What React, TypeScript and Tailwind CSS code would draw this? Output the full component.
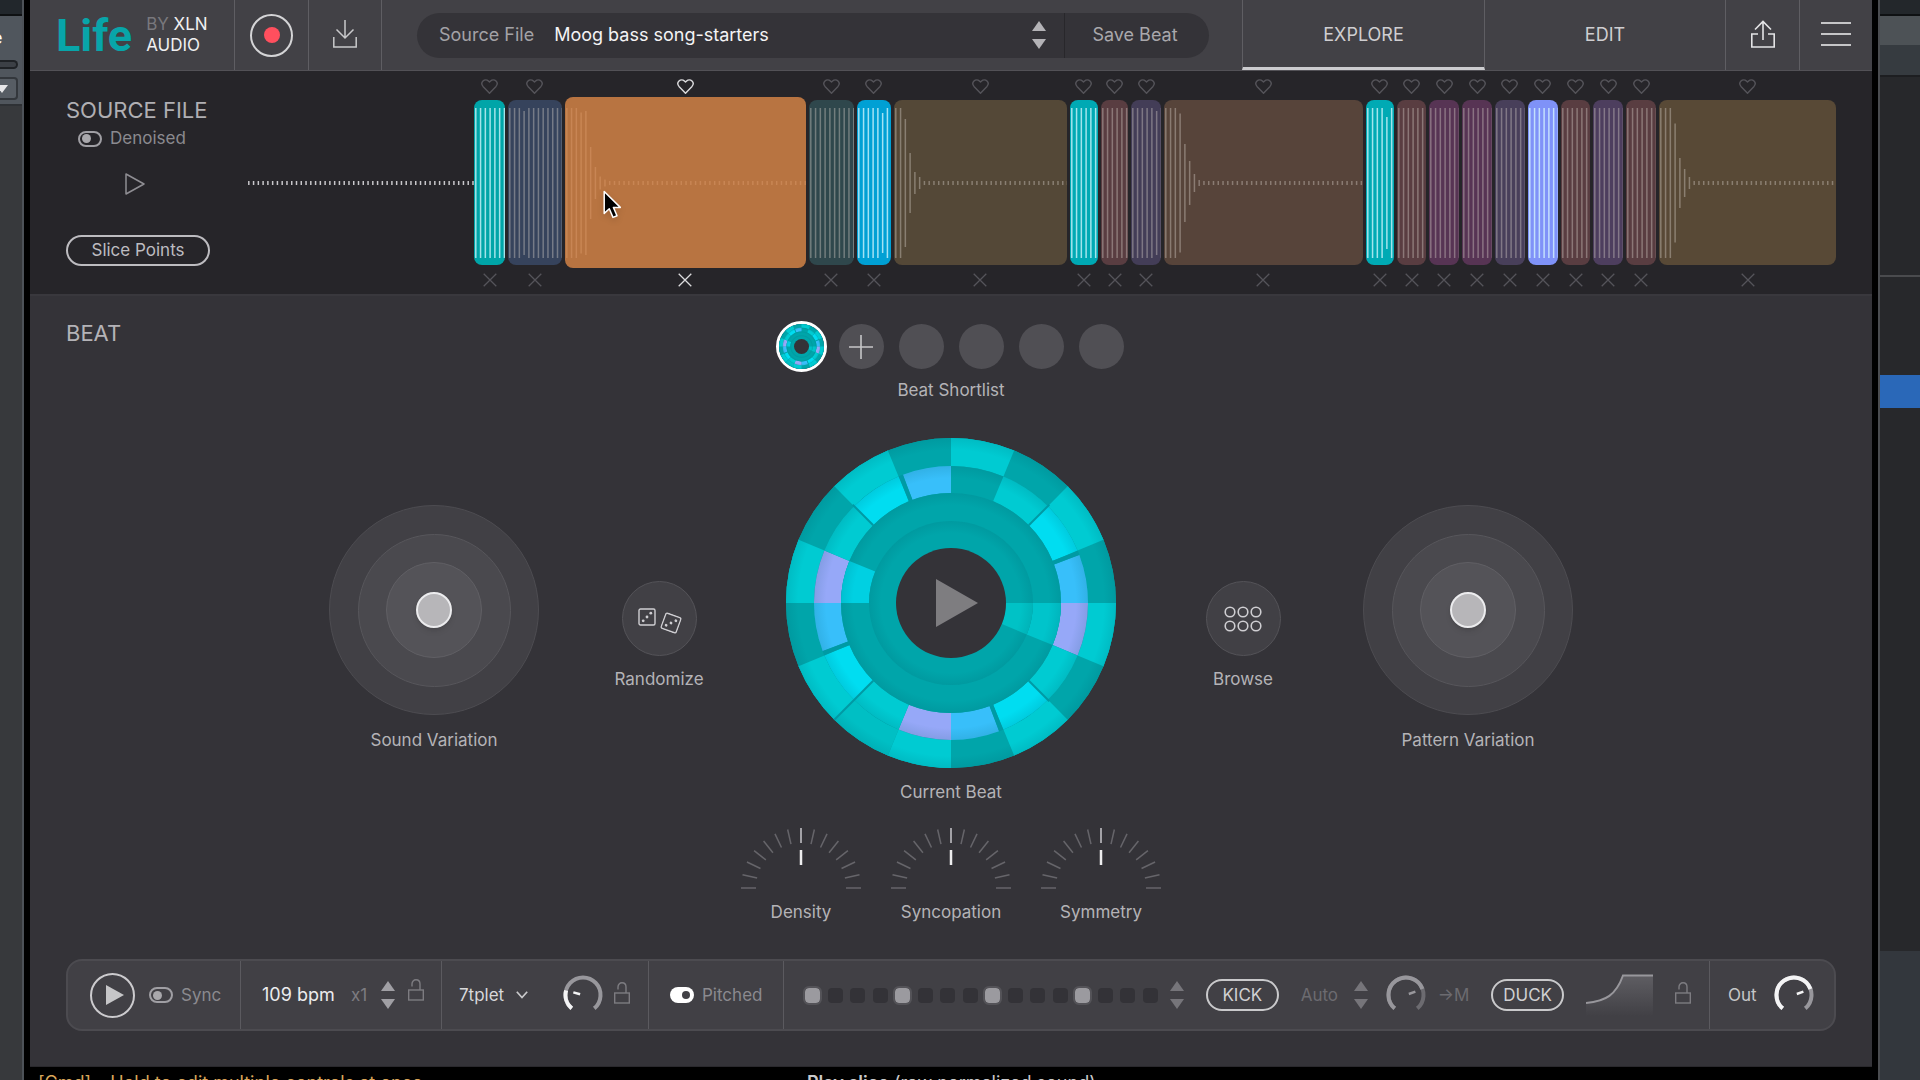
import React from "react";

type SliceData = { w: number; color: string; bright?: boolean; shape?: number[]; active?: boolean };

const WINE = "#593d41";
const PLUM = "#573454";

const SLICES: SliceData[] = [
  { w: 31, color: "#00a5a8", bright: true },
  { w: 54, color: "#36435c", shape: [150, 150, 150, 144] },
  { w: 243, color: "#b87441", shape: [150, 150, 150, 141, 144, 72, 32, 13, 7, 4], active: true },
  { w: 45, color: "#2f474c" },
  { w: 34, color: "#00a0d4", bright: true, shape: [150, 150, 150, 150, 150, 140] },
  { w: 174, color: "#544837", shape: [150, 150, 128, 60, 22, 12, 4] },
  { w: 29, color: "#00a9b4", bright: true },
  { w: 27, color: WINE },
  { w: 30, color: "#433d57", shape: [150, 150, 150, 150, 150, 144] },
  { w: 200, color: "#57443a", shape: [150, 150, 150, 139, 78, 44, 18, 6, 4] },
  { w: 28, color: "#00aab4", bright: true, shape: [150, 150, 150, 150, 132] },
  { w: 30, color: WINE },
  { w: 30, color: PLUM },
  { w: 30, color: PLUM },
  { w: 30, color: "#483f5a" },
  { w: 30, color: "#7f92f8", bright: true },
  { w: 30, color: WINE },
  { w: 30, color: "#4d3e5e" },
  { w: 30, color: WINE },
  { w: 178, color: "#584936", shape: [150, 150, 150, 119, 50, 28, 12, 4] },
];

function Waveform({ count, shape, stroke, opacity }: { count: number; shape: number[]; stroke: string; opacity: number }) {
  const last = shape.length ? shape[shape.length - 1] : 150;
  const rest = last > 10 ? 150 : last;
  return (
    <svg className="block h-[150px] w-full" aria-hidden="true">
      <g stroke={stroke} strokeOpacity={opacity} strokeWidth={1.5}>
        {Array.from({ length: count }, (_, i) => {
          const h = shape[i] ?? rest;
          const x = 1.8 + i * 4.77;
          return <line key={i} x1={x} x2={x} y1={75 - h / 2} y2={75 + h / 2} />;
        })}
      </g>
    </svg>
  );
}

function Heart() {
  return (
    <svg viewBox="0 0 17 15" className="h-[15px] w-[17px]" fill="none" stroke="currentColor" strokeWidth={1.4} strokeLinejoin="round" aria-hidden="true">
      <path d="M8.5 14.2 L2 7.4 C0.6 5.8 0.6 3.4 2 2 C3.5 0.5 5.9 0.5 7.4 2 L8.5 3.1 L9.6 2 C11.1 0.5 13.5 0.5 15 2 C16.4 3.4 16.4 5.8 15 7.4 Z" />
    </svg>
  );
}

function Cross() {
  return (
    <svg viewBox="0 0 14 14" className="size-[14px]" fill="none" stroke="currentColor" strokeWidth={1.3} aria-hidden="true">
      <path d="M0.7 0.7 L13.3 13.3 M13.3 0.7 L0.7 13.3" />
    </svg>
  );
}

function Cursor() {
  return (
    <svg viewBox="0 0 20 30" className="pointer-events-none absolute top-[90px] left-[38px] h-[30px] w-5 drop-shadow-md" aria-hidden="true">
      <path d="M1.2 1.5 V23.4 L6.3 18.7 L10 27.4 L14 25.7 L10.4 17.4 H17.3 Z" fill="#000" stroke="#fff" strokeWidth={1.5} strokeLinejoin="round" />
    </svg>
  );
}

function Slice({ s, index }: { s: SliceData; index: number }) {
  const n = index + 1;
  const tone = s.active ? "text-[#dcdcde]" : "text-[#55545a]";
  return (
    <div className="flex min-w-0 flex-col items-center" style={{ flex: `${s.w} 1 0px` }}>
      <button type="button" aria-label={`Favourite slice ${n}`} className={`mb-[6px] ${tone}`}>
        <Heart />
      </button>
      <div className="relative h-[165px] w-full">
        <button
          type="button"
          aria-label={`Play slice ${n}`}
          className={`flex w-full items-center overflow-hidden rounded-lg ${s.active ? "-mt-[3px] h-[171px]" : "h-[165px]"}`}
          style={{ backgroundColor: s.color }}
        >
          <Waveform
            count={Math.floor(s.w / 4.77) + 1}
            shape={s.shape ?? []}
            stroke={s.active ? "#e0a070" : s.bright ? "#d8f8ff" : "#d8d0c8"}
            opacity={s.active ? 0.4 : s.bright ? 0.75 : 0.4}
          />
        </button>
        {s.active && <Cursor />}
      </div>
      <button type="button" aria-label={`Discard slice ${n}`} className={`mt-[8px] ${tone}`}>
        <Cross />
      </button>
    </div>
  );
}

function Toggle({ label, on }: { label: string; on?: boolean }) {
  return (
    <label className="flex items-center gap-2 text-[17px] text-[#8b8a8f]">
      <input type="checkbox" role="switch" defaultChecked={on} className="sr-only" />
      {on ? (
        <span className="flex h-4 w-6 items-center justify-end rounded-full bg-white px-1">
          <span className="h-2 w-2 rounded-full bg-[#414045]" />
        </span>
      ) : (
        <span className="flex h-4 w-6 items-center rounded-full border-2 border-[#a09fa4] px-[2px]">
          <span className="size-[9px] rounded-full bg-[#a9a8ac]" />
        </span>
      )}
      {label}
    </label>
  );
}

function Stepper({ label, tone = "text-[#a09fa4]" }: { label: string; tone?: string }) {
  return (
    <div className={`flex flex-col gap-2 ${tone}`}>
      <button type="button" aria-label={`${label} up`}>
        <svg viewBox="0 0 14 10" className="block h-[10px] w-[14px]" fill="currentColor" aria-hidden="true">
          <path d="M7 0 L14 10 H0 Z" />
        </svg>
      </button>
      <button type="button" aria-label={`${label} down`}>
        <svg viewBox="0 0 14 10" className="block h-[10px] w-[14px]" fill="currentColor" aria-hidden="true">
          <path d="M7 10 L14 0 H0 Z" />
        </svg>
      </button>
    </div>
  );
}

function Lock({ label }: { label: string }) {
  return (
    <button type="button" aria-label={label} className="-mt-1 text-[#7d7c81]">
      <svg viewBox="0 0 16 22" className="block h-[22px] w-4" fill="none" stroke="currentColor" strokeWidth={1.4} aria-hidden="true">
        <rect x="0.7" y="11" width="14.6" height="10" />
        <path d="M4 7.5 V5 C4 2.4 5.8 0.8 8 0.8 C10.200 0.8 12 2.4 12 5 V11" />
      </svg>
    </button>
  );
}

const rad = (deg: number) => (deg * Math.PI) / 180;
const point = (cx: number, cy: number, r: number, deg: number) => [cx + r * Math.sin(rad(deg)), cy - r * Math.cos(rad(deg))];

function arc(cx: number, cy: number, r: number, a: number, b: number) {
  const [x1, y1] = point(cx, cy, r, a);
  const [x2, y2] = point(cx, cy, r, b);
  return `M${x1} ${y1} A${r} ${r} 0 ${b - a > 180 ? 1 : 0} 1 ${x2} ${y2}`;
}

function ArcKnob({ label, angle, lit, rest }: { label: string; angle: number; lit: string; rest: string }) {
  const [ax, ay] = point(20, 20, 3, angle);
  const [bx, by] = point(20, 20, 10, angle);
  return (
    <div className="relative size-10">
      <svg viewBox="0 0 40 40" className="block size-10" fill="none" aria-hidden="true">
        <path d={arc(20, 20, 17.5, -140, 140)} stroke={rest} strokeWidth={4} />
        <path d={arc(20, 20, 17.5, -140, angle)} stroke={lit} strokeWidth={4} />
        <line x1={ax} y1={ay} x2={bx} y2={by} stroke={lit === "#98979c" ? lit : "#f4f4f5"} strokeWidth={2.5} />
      </svg>
      <input type="range" aria-label={label} className="absolute inset-0 size-full opacity-0" />
    </div>
  );
}

function TickKnob({ label }: { label: string }) {
  return (
    <label className="relative flex w-[150px] flex-col items-center gap-[10px]">
      <svg viewBox="0 0 124 64" className="h-16 w-[124px]" strokeLinecap="butt" aria-hidden="true">
        {Array.from({ length: 15 }, (_, i) => {
          const a = -90 + (i * 180) / 14;
          const [x1, y1] = point(62, 62, 45, a);
          const [x2, y2] = point(62, 62, 60, a);
          return <line key={i} x1={x1} y1={y1} x2={x2} y2={y2} stroke={i === 7 ? "#a2a1a6" : "#66656a"} strokeWidth={i === 7 ? 2 : 1.5} />;
        })}
        <line x1="62" y1="24" x2="62" y2="39" stroke="#ededee" strokeWidth={2.5} />
      </svg>
      <span>{label}</span>
      <input type="range" className="absolute inset-0 size-full opacity-0" />
    </label>
  );
}

const DARK = "#00a5aa";
const TEAL = "#00cbd2";
const CYAN = "#00ddf1";
const BLUE = "#38bffa";
const LILAC = "#96a8f8";

const RINGS: { outer: number; inner: number; cells: string[] }[] = [
  { outer: 165, inner: 137, cells: [TEAL, DARK, TEAL, DARK, TEAL, DARK, TEAL, DARK, TEAL, "#00bfc4", TEAL, DARK, TEAL, DARK, TEAL, DARK] },
  { outer: 137, inner: 110, cells: [DARK, TEAL, CYAN, BLUE, LILAC, TEAL, CYAN, BLUE, LILAC, TEAL, CYAN, BLUE, LILAC, TEAL, CYAN, BLUE] },
  { outer: 110, inner: 82, cells: [DARK, DARK, DARK, DARK, "#00c4cb", DARK, DARK, DARK, DARK, DARK, DARK, DARK, "#00d0e2", DARK, DARK, DARK] },
  { outer: 82, inner: 55, cells: [DARK, DARK, DARK, DARK, "#00c2c6", DARK, DARK, DARK, DARK, DARK, DARK, DARK, DARK, DARK, DARK] },
];

function sector(inner: number, outer: number, a: number, b: number) {
  const [x1, y1] = point(165, 165, outer, a);
  const [x2, y2] = point(165, 165, outer, b);
  const [x3, y3] = point(165, 165, inner, b);
  const [x4, y4] = point(165, 165, inner, a);
  return `M${x1} ${y1} A${outer} ${outer} 0 0 1 ${x2} ${y2} L${x3} ${y3} A${inner} ${inner} 0 0 0 ${x4} ${y4} Z`;
}

function BeatWheel({ id, className }: { id: string; className: string }) {
  return (
    <svg viewBox="0 0 330 330" className={className} aria-hidden="true">
      <defs>
        {RINGS.map((r) => (
          <radialGradient key={r.outer} id={`${id}-${r.outer}`} gradientUnits="userSpaceOnUse" cx="165" cy="165" r={r.outer}>
            <stop offset={(r.outer - 12) / r.outer} stopColor="#004a58" stopOpacity="0" />
            <stop offset="1" stopColor="#004a58" stopOpacity="0.12" />
          </radialGradient>
        ))}
      </defs>
      <circle cx="165" cy="165" r="165" fill={DARK} />
      {RINGS.map((r) => (
        <g key={r.outer}>
          <circle cx="165" cy="165" r={r.outer} fill={DARK} />
          {r.cells.map((c, i) => {
            if (c === DARK) return null;
            const gap = c === BLUE ? 2 : 0;
            return <path key={i} d={sector(r.inner, r.outer, i * 22.5 + gap, i * 22.5 + 22.5)} fill={c} />;
          })}
          <circle cx="165" cy="165" r={r.outer} fill={`url(#${id}-${r.outer})`} />
        </g>
      ))}
      {[45, 135, 225, 315].map((a) => {
        const [x1, y1] = point(165, 165, 110, a);
        const [x2, y2] = point(165, 165, a === 225 ? 165 : 139, a);
        return <line key={a} x1={x1} y1={y1} x2={x2} y2={y2} stroke="#009aa4" strokeWidth={2} />;
      })}
      {[67.5, 157.5, 247.5, 337.5].map((a) => {
        const [x1, y1] = point(165, 165, 110, a + 1);
        const [x2, y2] = point(165, 165, 137, a + 1);
        return <line key={a} x1={x1} y1={y1} x2={x2} y2={y2} stroke="#009aa4" strokeWidth={4} />;
      })}
      <circle cx="165" cy="165" r="55" fill="#343338" />
    </svg>
  );
}

function VariationPad({ label }: { label: string }) {
  return (
    <label className="relative mt-[67px] flex w-[210px] flex-col items-center gap-[13px]">
      <span className="flex size-[210px] items-center justify-center rounded-full border border-[#4d4c51] bg-[#414045]">
        <span className="flex size-[153px] items-center justify-center rounded-full border border-[#57565b] bg-[#4a494e]">
          <span className="flex size-24 items-center justify-center rounded-full border border-[#605f64] bg-[#545358]">
            <span className="size-9 rounded-full border-2 border-[#ececee] bg-[#b7b6b9] shadow-md" />
          </span>
        </span>
      </span>
      <span>{label}</span>
      <input type="range" className="absolute inset-0 size-full opacity-0" />
    </label>
  );
}

function RoundAction({ label, children }: { label: string; children: React.ReactNode }) {
  return (
    <button type="button" className="mt-[143px] flex w-[120px] flex-col items-center gap-[11px]">
      <span className="flex size-[75px] items-center justify-center rounded-full border border-[#545358] bg-[#414045]">{children}</span>
      <span>{label}</span>
    </button>
  );
}

function Die({ className }: { className: string }) {
  return (
    <svg viewBox="0 0 18 18" className={className} aria-hidden="true">
      <rect x="1" y="1" width="16" height="16" rx="1.500" fill="none" stroke="#cfced2" strokeWidth={1.4} />
      <g fill="#cfced2">
        <circle cx="5.200" cy="12.800" r="1.400" />
        <circle cx="9" cy="9" r="1.400" />
        <circle cx="12.800" cy="5.200" r="1.400" />
      </g>
    </svg>
  );
}

function Header() {
  return (
    <header className="flex h-[71px] shrink-0 items-stretch border-b border-[#525156] bg-[#424146] text-lg">
      <div className="flex w-[205px] items-center gap-[14px] border-r border-[#5f5e63] pl-[26px]">
        <span className="font-[Roboto] text-[45px] leading-none font-bold text-[#08a5a9]">Life</span>
        <span className="text-[17px] leading-[21px] text-[#f0f0f1]">
          <span className="text-[#79787d]">BY</span> XLN
          <br />
          AUDIO
        </span>
      </div>
      <button type="button" aria-label="Record" className="flex w-[74px] items-center justify-center border-r border-[#5f5e63]">
        <span className="flex size-[43px] items-center justify-center rounded-full border-2 border-[#d4d4d6]">
          <span className="size-4 rounded-full bg-[#ff4f5e]" />
        </span>
      </button>
      <button type="button" aria-label="Import" className="flex w-[73px] items-center justify-center border-r border-[#5f5e63] pb-[3px]">
        <svg viewBox="0 0 24 28" className="h-7 w-6" fill="none" stroke="#c9c9cb" strokeWidth={1.5} aria-hidden="true">
          <path d="M12 0 V18 M3.500 9.500 L12 18 L20.500 9.500 M0.800 17 V27 H23.200 V17" />
        </svg>
      </button>
      <div className="flex flex-1 items-center pr-[33px] pl-[35px]">
        <div className="flex h-[45px] flex-1 items-center rounded-full bg-[#343338]">
          <label htmlFor="source" className="pl-[22px] text-[#a3a2a6]">
            Source File
          </label>
          <select id="source" className="min-w-0 flex-1 appearance-none pl-5 text-[#f4f4f5] outline-none">
            <option>Moog bass song-starters</option>
          </select>
          <div className="px-[18px]">
            <Stepper label="Source file" tone="text-[#b4b3b7]" />
          </div>
          <button type="button" className="h-full w-[145px] border-l border-[#28272b] pr-1 text-lg text-[#a9a8ac]">
            Save Beat
          </button>
        </div>
      </div>
      <nav className="flex text-[#cfced1]">
        <button type="button" className="w-[243px] border-r border-b-[3px] border-l border-[#5f5e63] border-b-[#cccccf] pt-[3px]">
          EXPLORE
        </button>
        <button type="button" className="w-[241px] border-r border-[#5f5e63]">
          EDIT
        </button>
      </nav>
      <button type="button" aria-label="Share" className="flex w-[74px] items-center justify-center border-r border-[#5f5e63] pb-[3px]">
        <svg viewBox="0 0 24 28" className="h-7 w-6" fill="none" stroke="#e4e4e6" strokeWidth={1.6} aria-hidden="true">
          <path d="M12 20 V1.500 M4 9.500 L12 1.500 L20 9.500 M7 14 H0.800 V27 H23.200 V14 H17" />
        </svg>
      </button>
      <button type="button" aria-label="Menu" className="flex w-[72px] flex-col items-center justify-center gap-[9px] pb-[2px]">
        <span className="h-[2px] w-[30px] bg-[#c6c6c8]" />
        <span className="h-[2px] w-[30px] bg-[#c6c6c8]" />
        <span className="h-[2px] w-[30px] bg-[#c6c6c8]" />
      </button>
    </header>
  );
}

function SourcePanel() {
  return (
    <section className="flex h-[225px] shrink-0 border-b-2 border-[#39383d] bg-[#262529] px-9">
      <div className="flex w-[181px] flex-col items-start pt-[25px]">
        <h2 className="text-[22px] leading-7 text-[#b0afb3]">SOURCE FILE</h2>
        <div className="pt-[2px] pl-3">
          <Toggle label="Denoised" />
        </div>
        <button type="button" aria-label="Play source" className="mt-[21px] ml-[59px]">
          <svg viewBox="0 0 20 22" className="block h-[22px] w-5" fill="none" stroke="#8f8e93" strokeWidth={1.5} strokeLinejoin="round" aria-hidden="true">
            <path d="M1 1 L19 11 L1 21 Z" />
          </svg>
        </button>
        <button type="button" className="mt-10 flex h-[31px] w-36 items-center justify-center rounded-full border-2 border-[#bdbcc0] pt-[1px] text-[17px] text-[#bdbcc0]">
          Slice Points
        </button>
      </div>
      <div className="flex min-w-0 flex-1 pt-[8px]">
        <div className="min-w-0 overflow-hidden pt-[29px]" style={{ flex: "227 1 0px" }}>
          <Waveform count={48} shape={[4]} stroke="#c8c7ca" opacity={1} />
        </div>
        <div className="flex min-w-0 gap-[3px]" style={{ flex: "1361 1 0px" }}>
          {SLICES.map((s, i) => (
            <Slice key={i} s={s} index={i} />
          ))}
        </div>
      </div>
    </section>
  );
}

function BeatPanel() {
  return (
    <section className="flex flex-1 flex-col bg-[#343338] px-9 text-[17px] leading-6 text-[#b4b3b7]">
      <h2 className="h-[25px] pt-[23px] text-[22px] leading-7">BEAT</h2>
      <div className="flex flex-col items-center gap-[6px]">
        <div className="flex items-center gap-[15px] pr-[3px]">
          <button type="button" aria-label="Beat 1" className="rounded-full border-[3px] border-white">
            <BeatWheel id="mini" className="size-[45px]" />
          </button>
          <button type="button" aria-label="Add beat" className="-ml-[3px] flex size-[45px] items-center justify-center rounded-full bg-[#504f54]">
            <svg viewBox="0 0 24 24" className="size-6" stroke="#c6c6c8" strokeWidth={1.6} aria-hidden="true">
              <path d="M12 0 V24 M0 12 H24" />
            </svg>
          </button>
          {[3, 4, 5, 6].map((n) => (
            <button key={n} type="button" aria-label={`Empty beat ${n}`} className="size-[45px] rounded-full bg-[#504f54]" />
          ))}
        </div>
        <span>Beat Shortlist</span>
      </div>
      <div className="flex items-start justify-center pt-9">
        <VariationPad label="Sound Variation" />
        <div className="ml-[60px]">
          <RoundAction label="Randomize">
            <Die className="-mt-1 size-[18px]" />
            <Die className="mt-2 ml-[6px] size-[18px] rotate-[20deg]" />
          </RoundAction>
        </div>
        <button type="button" className="mx-[67px] flex flex-col items-center gap-3">
          <span className="relative flex items-center justify-center">
            <BeatWheel id="main" className="size-[330px]" />
            <svg viewBox="0 0 42 48" className="absolute left-[150px] h-12 w-[42px]" aria-hidden="true">
              <path d="M0 0 L42 24 L0 48 Z" fill="#7e7d80" />
            </svg>
          </span>
          <span>Current Beat</span>
        </button>
        <div className="mr-[60px]">
          <RoundAction label="Browse">
            <svg viewBox="0 0 38 26" className="h-[26px] w-[38px]" fill="none" stroke="#cfced2" strokeWidth={1.6} aria-hidden="true">
              {[6, 19, 32].map((x) => [6, 20].map((y) => <circle key={`${x}-${y}`} cx={x} cy={y} r="4.800" />))}
            </svg>
          </RoundAction>
        </div>
        <VariationPad label="Pattern Variation" />
      </div>
      <div className="flex justify-center pt-[22px]">
        <TickKnob label="Density" />
        <TickKnob label="Syncopation" />
        <TickKnob label="Symmetry" />
      </div>
      <Transport />
    </section>
  );
}

function Transport() {
  return (
    <div className="mt-auto mb-[35px] flex h-[72px] shrink-0 items-stretch rounded-2xl border-2 border-[#4c4b50] bg-[#414045]">
      <div className="flex w-[173px] items-center gap-[14px] border-r border-[#5b5a5f] pl-[22px]">
        <button type="button" aria-label="Play" className="flex size-[45px] items-center justify-center rounded-full border-2 border-[#cccbce]">
          <svg viewBox="0 0 18 20" className="ml-1 h-5 w-[18px]" fill="#c6c6c8" aria-hidden="true">
            <path d="M0 0 L18 10 L0 20 Z" />
          </svg>
        </button>
        <Toggle label="Sync" />
      </div>
      <div className="flex w-[201px] items-center border-r border-[#5b5a5f] pl-[21px]">
        <input type="text" aria-label="Tempo" defaultValue="109 bpm" className="w-[89px] text-lg text-[#ececee] outline-none" />
        <span className="w-[30px] text-[#7d7c81]">x1</span>
        <Stepper label="Tempo" />
        <div className="ml-[13px]">
          <Lock label="Lock tempo" />
        </div>
      </div>
      <div className="flex w-[207px] items-center border-r border-[#5b5a5f] pl-[17px]">
        <div className="relative flex items-center">
          <select aria-label="Grid" className="w-[69px] appearance-none text-[#d8d8da] outline-none">
            <option>7tplet</option>
          </select>
          <svg viewBox="0 0 12 8" className="pointer-events-none absolute right-0 h-2 w-3" fill="none" stroke="#c9c9cb" strokeWidth={1.7} aria-hidden="true">
            <path d="M0.800 0.800 L6 6.500 L11.200 0.800" />
          </svg>
        </div>
        <div className="mr-[11px] ml-[35px]">
          <ArcKnob label="Swing" angle={-75} lit="#f4f4f5" rest="#98979c" />
        </div>
        <Lock label="Lock grid" />
      </div>
      <div className="flex w-[135px] items-center border-r border-[#5b5a5f] pl-[21px]">
        <Toggle label="Pitched" on />
      </div>
      <div className="flex flex-1 items-center justify-between border-r border-[#5b5a5f] pr-[18px] pl-[19px]">
        <div className="flex items-center gap-[10px]">
          <div className="flex w-[357px] items-center justify-between">
            {Array.from({ length: 16 }, (_, i) => (
              <input
                key={i}
                type="checkbox"
                aria-label={`Step ${i + 1}`}
                defaultChecked={i % 4 === 0}
                className="size-[19px] appearance-none rounded-md border-2 border-transparent bg-[#333237] bg-clip-padding checked:border-[#545358] checked:bg-[#9b9a9f]"
              />
            ))}
          </div>
          <Stepper label="Pattern" tone="text-[#76757a]" />
        </div>
        <button type="button" className="h-8 w-[73px] rounded-full border-2 border-[#c9c9cb] text-[17px] leading-none text-[#d0d0d2]">
          KICK
        </button>
        <div className="flex items-center text-[#6c6b70]">
          <span className="w-[53px]">Auto</span>
          <Stepper label="Auto" tone="text-[#76757a]" />
          <div className="mr-3 ml-[18px]">
            <ArcKnob label="Kick amount" angle={70} lit="#98979c" rest="#6c6b70" />
          </div>
          <span>→M</span>
        </div>
        <button type="button" className="h-8 w-[73px] rounded-full border-2 border-[#c9c9cb] text-[17px] leading-none text-[#d0d0d2]">
          DUCK
        </button>
        <div className="flex items-center gap-[22px]">
          <svg viewBox="0 0 67 42" className="h-[42px] w-[67px]" aria-hidden="true">
            <defs>
              <linearGradient id="duck" x1="0" y1="0" x2="0" y2="1">
                <stop offset="0" stopColor="#5f5e63" />
                <stop offset="1" stopColor="#414045" />
              </linearGradient>
            </defs>
            <path d="M0 29 C20 27 30 21 37 1 H67 V42 H0 Z" fill="url(#duck)" />
            <path d="M0 29 C20 27 30 21 37 1.500 H67" fill="none" stroke="#98979c" strokeWidth={2} />
          </svg>
          <Lock label="Lock duck" />
        </div>
      </div>
      <div className="flex w-[124px] items-center pl-[18px]">
        <span className="w-[46px] text-[#c6c6c8]">Out</span>
        <ArcKnob label="Output" angle={70} lit="#f4f4f5" rest="#98979c" />
      </div>
    </div>
  );
}

export default function App() {
  return (
    <div className="flex h-screen overflow-hidden bg-black font-[Inter,sans-serif]">
      <div className="flex w-6 shrink-0 flex-col overflow-hidden border-r-2 border-[#4d5258] bg-[#37393c]">
        <div className="h-4 shrink-0 border-b-2 border-[#0f1113] bg-[#22272c]" />
        <div className="flex h-[90px] shrink-0 flex-col items-start border-b-2 border-[#2e3135] bg-[#50565d]">
          <span className="-ml-2 pt-[10px] text-lg leading-6 text-white">e</span>
          <span className="mt-[10px] h-[9px] w-[18px] rounded-r-full border-2 border-l-0 border-[#1f2226] bg-[#3c4046]" />
          <span className="mt-2 flex h-[23px] w-[18px] items-center rounded-r border-2 border-l-0 border-[#33373c] bg-[#575d64]">
            <svg viewBox="0 0 8 8" className="size-2" fill="#e6e6e8" aria-hidden="true">
              <path d="M-4 0 H8 L2 8 Z" />
            </svg>
          </span>
        </div>
      </div>
      <main className="mx-[6px] flex min-w-0 flex-1 flex-col">
        <Header />
        <SourcePanel />
        <BeatPanel />
        <footer className="flex h-[14px] shrink-0 border-t border-[#2a292d] text-lg leading-6 whitespace-nowrap">
          <span className="w-[777px] pt-1 pl-2 text-[#d9a65a]">
            [Cmd] – Hold to edit multiple controls at once.
          </span>
          <span className="pt-1 text-[#c9c9cb]">
            <strong className="font-semibold">Play slice</strong> (raw normalized sound)
          </span>
        </footer>
      </main>
      <div className="flex w-[42px] shrink-0 flex-col border-l-2 border-[#4a4c50] bg-[#27282b]">
        <div className="h-4 shrink-0 border-b-2 border-[#0f1113] bg-[#23272b]" />
        <div className="h-[29px] shrink-0 bg-[#4d5256]" />
        <div className="h-8 shrink-0 border-b-2 border-[#1d1e21] bg-[#363b40]" />
        <div className="h-[200px] shrink-0 border-b-2 border-[#4a4b4e]" />
        <div className="h-[98px] shrink-0" />
        <div className="h-[33px] shrink-0 bg-[#2a68b8]" />
        <div className="h-[543px] shrink-0" />
        <div className="flex-1 bg-[#33373d]" />
      </div>
    </div>
  );
}
